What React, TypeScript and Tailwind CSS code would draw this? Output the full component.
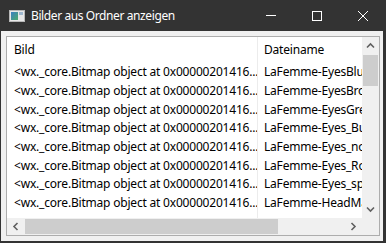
import React from "react";

// Windows-style dialog with a report list control (wxPython)

const FONT = { fontFamily: '"Noto Sans", "Open Sans", sans-serif' };

const files = [
  "LaFemme-EyesBlue.png",
  "LaFemme-EyesBrown.png",
  "LaFemme-EyesGreen.png",
  "LaFemme-Eyes_Burned.png",
  "LaFemme-Eyes_normal.png",
  "LaFemme-Eyes_Round.png",
  "LaFemme-Eyes_spiral.png",
  "LaFemme-HeadMask.png",
];

function Chevron({ dir }: { dir: "up" | "down" | "left" | "right" }) {
  const rot = { up: 0, right: 90, down: 180, left: 270 }[dir];
  return (
    <svg width="9" height="9" viewBox="0 0 9 9" style={{ transform: `rotate(${rot}deg)` }}>
      <path d="M1 6.5 L4.5 3 L8 6.5" fill="none" stroke="#606060" strokeWidth="1.6" />
    </svg>
  );
}

function AppIcon() {
  return (
    <svg width="16" height="12" viewBox="0 0 16 12">
      <defs>
        <linearGradient id="g" x1="0" y1="0" x2="1" y2="1">
          <stop offset="0" stopColor="#3b7fc4" />
          <stop offset="1" stopColor="#4caa6a" />
        </linearGradient>
      </defs>
      <rect x="0.5" y="0.5" width="15" height="11" fill="#e8e8e8" stroke="#b8b8b8" />
      <rect x="2" y="2" width="7" height="8" fill="url(#g)" />
      <rect x="10" y="2" width="4" height="3" fill="#9fb8cf" />
    </svg>
  );
}

export default function App() {
  return (
    <div className="w-[386px] h-[243px] bg-[#333333] flex flex-col overflow-hidden" style={FONT}>
      {/* title bar */}
      <div className="h-[31px] flex items-center text-white text-[12px] shrink-0">
        <div className="ml-[9px] mt-[1px] flex">
          <AppIcon />
        </div>
        <span className="ml-[6px] tracking-[-0.4px]">Bilder aus Ordner anzeigen</span>
        <div className="ml-auto flex items-center h-full">
          <div className="w-[46px] h-full flex items-center justify-center">
            <div className="w-[10px] h-px bg-white" />
          </div>
          <div className="w-[46px] h-full flex items-center justify-center">
            <div className="w-[10px] h-[10px] border border-white" />
          </div>
          <div className="w-[46px] h-full flex items-center justify-center">
            <svg width="12" height="12" viewBox="0 0 12 12">
              <path d="M1 1 L11 11 M11 1 L1 11" stroke="white" strokeWidth="1" />
            </svg>
          </div>
        </div>
      </div>

      {/* window body */}
      <div className="flex-1 ml-px mr-[3px] mb-[2px] bg-[#f0f0f0] pt-[5px] pl-[5px] pr-[3px] pb-[5px] flex">
        <div className="flex-1 border border-[#adadad] bg-white grid grid-cols-[1fr_17px] grid-rows-[1fr_17px] text-[12px] text-black">
          {/* content */}
          <div className="overflow-hidden relative">
            <div className="absolute top-0 bottom-0 left-[250px] w-px bg-[#ececec]" />
            <div className="h-[26px] flex items-center">
              <div className="w-[251px] pl-[7px] shrink-0 tracking-[-0.2px]">Bild</div>
              <div className="pl-[6px] tracking-[-0.2px]">Dateiname</div>
            </div>
            {files.map((f) => (
              <div key={f} className="h-[18.7px] flex items-center whitespace-nowrap">
                <div className="w-[251px] pl-[7px] shrink-0 overflow-hidden tracking-[-0.2px]">
                  &lt;wx._core.Bitmap object at 0x00000201416...
                </div>
                <div className="pl-[6px] tracking-[-0.2px]">{f}</div>
              </div>
            ))}
          </div>

          {/* vertical scrollbar */}
          <div className="bg-[#f0f0f0] flex flex-col">
            <div className="h-[17px] flex items-center justify-center">
              <Chevron dir="up" />
            </div>
            <div className="mt-[1px] h-[31px] mx-px bg-[#cdcdcd]" />
            <div className="flex-1" />
            <div className="h-[17px] flex items-center justify-center">
              <Chevron dir="down" />
            </div>
          </div>

          {/* horizontal scrollbar */}
          <div className="bg-[#f0f0f0] flex">
            <div className="w-[17px] flex items-center justify-center">
              <Chevron dir="left" />
            </div>
            <div className="ml-[1px] w-[253px] my-px bg-[#cdcdcd]" />
            <div className="flex-1" />
            <div className="w-[17px] flex items-center justify-center">
              <Chevron dir="right" />
            </div>
          </div>

          {/* corner */}
          <div className="bg-[#f0f0f0]" />
        </div>
      </div>
    </div>
  );
}
